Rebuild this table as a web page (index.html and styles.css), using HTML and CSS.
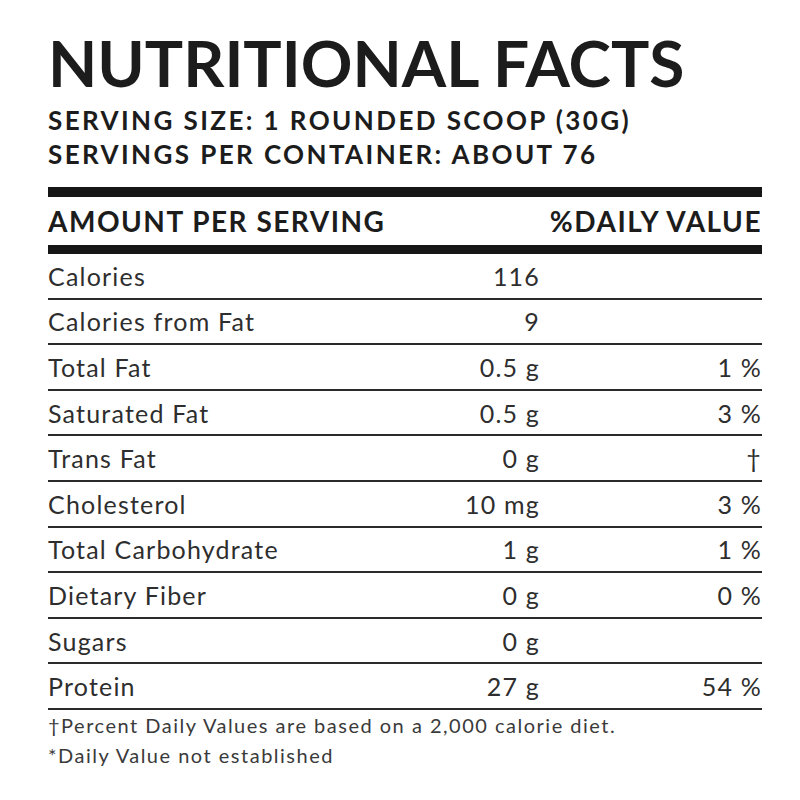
FILE: index.html
```html
<!DOCTYPE html>
<html lang="en">
<head>
    <meta charset="UTF-8">
    <meta name="viewport" content="width=device-width, initial-scale=1.0">
    <title>Nutritional Facts</title>
    <link rel="stylesheet" href="styles.css">
</head>
<body>
    <div class="facts">
        <h1 class="title">NUTRITIONAL FACTS</h1>
        <p class="serving">SERVING SIZE: 1 ROUNDED SCOOP (30G)</p>
        <p class="serving">SERVINGS PER CONTAINER: ABOUT 76</p>

        <div class="head-row">
            <span>AMOUNT PER SERVING</span>
            <span>%DAILY VALUE</span>
        </div>

        <div class="rows">
            <div class="row"><span class="name">Calories</span><span class="amt">116</span><span class="dv"></span></div>
            <div class="row"><span class="name">Calories from Fat</span><span class="amt">9</span><span class="dv"></span></div>
            <div class="row"><span class="name">Total Fat</span><span class="amt">0.5 g</span><span class="dv">1 %</span></div>
            <div class="row"><span class="name">Saturated Fat</span><span class="amt">0.5 g</span><span class="dv">3 %</span></div>
            <div class="row"><span class="name">Trans Fat</span><span class="amt">0 g</span><span class="dv">†</span></div>
            <div class="row"><span class="name">Cholesterol</span><span class="amt">10 mg</span><span class="dv">3 %</span></div>
            <div class="row"><span class="name">Total Carbohydrate</span><span class="amt">1 g</span><span class="dv">1 %</span></div>
            <div class="row"><span class="name">Dietary Fiber</span><span class="amt">0 g</span><span class="dv">0 %</span></div>
            <div class="row"><span class="name">Sugars</span><span class="amt">0 g</span><span class="dv"></span></div>
            <div class="row"><span class="name">Protein</span><span class="amt">27 g</span><span class="dv">54 %</span></div>
        </div>

        <div class="notes">
            <p class="note">†Percent Daily Values are based on a 2,000 calorie diet.</p>
            <p class="note">*Daily Value not established</p>
        </div>
    </div>
</body>
</html>
```

FILE: styles.css
```css
body {
    font-family: 'Lato', 'Open Sans', sans-serif;
    margin: 0;
    padding: 0;
    background-color: #fff;
    color: #1c1c1c;
}

.facts {
    width: 714px;
    margin-left: 48px;
    padding-top: 31px;
}

.title {
    font-size: 64px;
    font-weight: 700;
    line-height: 64px;
    margin: 0 0 8px 0;
}

.serving {
    font-size: 26px;
    font-weight: 700;
    line-height: 34px;
    letter-spacing: 2.4px;
    margin: 0;
}

.head-row {
    margin-top: 16px;
    border-top: 10px solid #161616;
    border-bottom: 9px solid #161616;
    height: 48px;
    display: flex;
    align-items: center;
    justify-content: space-between;
    font-size: 28px;
    font-weight: 700;
    letter-spacing: 1.5px;
}

.row {
    display: grid;
    grid-template-columns: 1fr 150px 222px;
    align-items: center;
    height: 43.6px;
    border-bottom: 2px solid #2a2a2a;
    font-size: 25px;
    letter-spacing: 1.2px;
    color: #2e2e2e;
}

.amt,
.dv {
    text-align: right;
}

.notes {
    padding-top: 0;
    color: #3a3a3a;
}

.note {
    font-size: 20px;
    line-height: 30px;
    letter-spacing: 1.5px;
    margin: 0;
}
```
